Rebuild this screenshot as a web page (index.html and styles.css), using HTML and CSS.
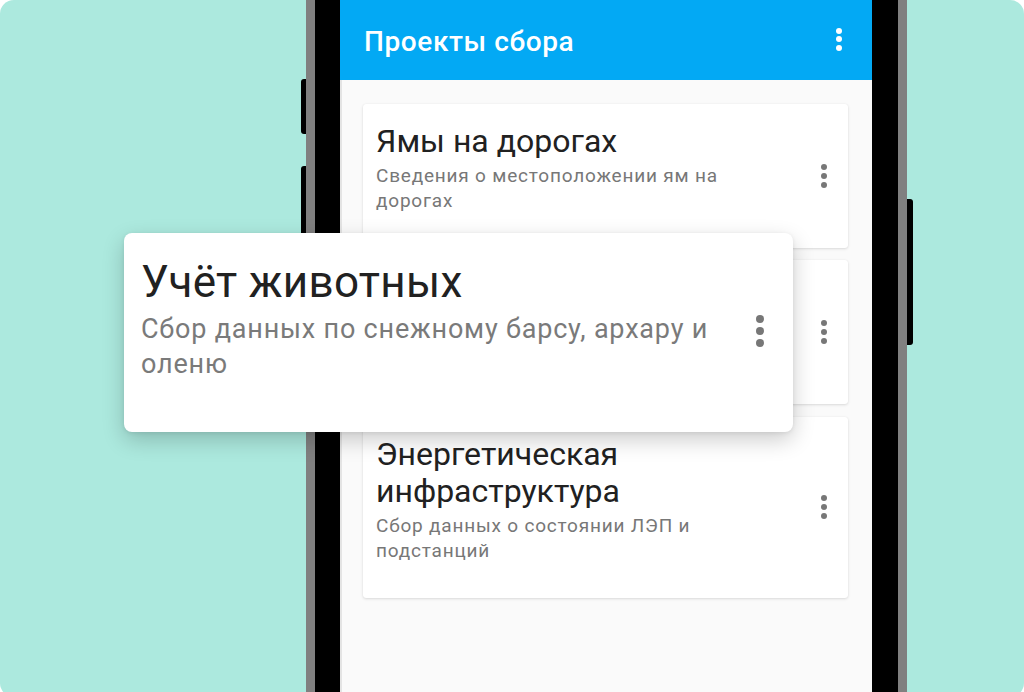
FILE: index.html
```html
<!DOCTYPE html>
<html lang="ru">
<head>
  <meta charset="UTF-8">
  <meta name="viewport" content="width=device-width, initial-scale=1.0">
  <title>Проекты сбора</title>
  <link rel="stylesheet" href="styles.css">
</head>
<body>
  <div class="frame">
    <!-- Phone mockup -->
    <div class="phone">
      <span class="side-btn side-btn-left side-btn-top"></span>
      <span class="side-btn side-btn-left side-btn-mid"></span>
      <span class="side-btn side-btn-right"></span>

      <div class="screen">
        <header class="appbar">
          <h1>Проекты сбора</h1>
          <span class="dots dots-light"><i></i><i></i><i></i></span>
        </header>

        <div class="project-list">
          <div class="project-card">
            <div class="project-text">
              <div class="project-title">Ямы на дорогах</div>
              <div class="project-desc">Сведения о местоположении ям на дорогах</div>
            </div>
            <div class="project-menu"><span class="dots"><i></i><i></i><i></i></span></div>
          </div>

          <!-- covered by the zoomed card -->
          <div class="project-card project-card-behind">
            <div class="project-text">
              <div class="project-title">Учёт животных</div>
              <div class="project-desc">Сбор данных по снежному барсу, архару и оленю</div>
            </div>
            <div class="project-menu"><span class="dots"><i></i><i></i><i></i></span></div>
          </div>

          <div class="project-card">
            <div class="project-text">
              <div class="project-title">Энергетическая инфраструктура</div>
              <div class="project-desc">Сбор данных о состоянии ЛЭП и подстанций</div>
            </div>
            <div class="project-menu"><span class="dots"><i></i><i></i><i></i></span></div>
          </div>
        </div>
      </div>
    </div>

    <!-- Zoomed card on top -->
    <div class="project-card project-card-zoom">
      <div class="project-text">
        <div class="project-title">Учёт животных</div>
        <div class="project-desc">Сбор данных по снежному барсу, архару и оленю</div>
      </div>
      <div class="project-menu"><span class="dots"><i></i><i></i><i></i></span></div>
    </div>
  </div>
</body>
</html>
```

FILE: styles.css
```css
body {
  margin: 0;
  padding: 0;
  background-color: #ffffff;
  font-family: Roboto, "Noto Sans", sans-serif;
  overflow: hidden;
}

.frame {
  position: relative;
  width: 1024px;
  height: 697px;
  background-color: #ace9de;
  border-radius: 14px;
  overflow: hidden;
  display: flex;
  padding-left: 306px;
  box-sizing: border-box;
}

/* Phone */

.phone {
  position: relative;
  width: 601px;
  height: 100%;
  background-color: #000000;
  border-left: 9px solid #808080;
  border-right: 9px solid #808080;
  padding: 0 26px 0 25px;
  box-sizing: border-box;
  display: flex;
}

.side-btn {
  position: absolute;
  background-color: #000000;
}

.side-btn-left {
  left: -14px;
  width: 5px;
  border-radius: 3px 0 0 3px;
}

.side-btn-top {
  top: 79px;
  height: 55px;
}

.side-btn-mid {
  top: 166px;
  height: 90px;
}

.side-btn-right {
  right: -15px;
  top: 199px;
  width: 6px;
  height: 146px;
  border-radius: 0 3px 3px 0;
}

.screen {
  flex: 1;
  background-color: #fafafa;
  border-left: 2px solid #e4e4e4;
  display: flex;
  flex-direction: column;
}

.appbar {
  height: 80px;
  margin-left: -2px;
  background-color: #03a9f4;
  display: flex;
  align-items: center;
  justify-content: space-between;
  padding: 0 30px 0 24px;
  flex-shrink: 0;
}

.appbar h1 {
  margin: 0;
  font-size: 28px;
  font-weight: 500;
  letter-spacing: 0.6px;
  color: #ffffff;
  padding-top: 3px;
}

/* Three dot menu */

.dots {
  display: flex;
  flex-direction: column;
  gap: 3px;
}

.dots i {
  display: block;
  width: 6px;
  height: 6px;
  border-radius: 50%;
  background-color: #777777;
}

.dots-light {
  gap: 2.5px;
  margin-top: -2px;
}

.dots-light i {
  background-color: #ffffff;
}

/* Cards */

.project-list {
  display: flex;
  flex-direction: column;
  gap: 12.5px;
  padding: 24px 24px 0 21px;
}

.project-card {
  display: flex;
  align-items: center;
  background-color: #ffffff;
  border-radius: 3px;
  box-shadow: 0 1px 3px rgba(0, 0, 0, 0.13), 0 0 1px rgba(0, 0, 0, 0.08);
  padding: 18.6px 0 35px 13px;
}

.project-card-behind .project-text {
  visibility: hidden;
}

.project-text {
  flex: 1;
}

.project-title {
  font-size: 32px;
  line-height: 37px;
  color: #212121;
}

.project-desc {
  margin-top: 3.4px;
  font-size: 19px;
  line-height: 25px;
  letter-spacing: 0.8px;
  color: #777777;
}

.project-menu {
  width: 56px;
  align-self: stretch;
  display: flex;
  align-items: center;
  justify-content: flex-end;
  padding-right: 21px;
  box-sizing: border-box;
  margin-bottom: -16px;
}

/* Zoomed-in copy of the second card */

.project-card-zoom {
  position: absolute;
  left: 124px;
  top: 233px;
  width: 669px;
  box-sizing: border-box;
  border-radius: 8px;
  padding: 24px 0 50px 17px;
  box-shadow: 0 8px 22px rgba(0, 0, 0, 0.2), 0 1px 4px rgba(0, 0, 0, 0.08);
}

.project-card-zoom .project-title {
  font-size: 44px;
  line-height: 50px;
  letter-spacing: 0.3px;
}

.project-card-zoom .project-desc {
  margin-top: 5px;
  font-size: 27px;
  line-height: 35px;
  letter-spacing: 0.8px;
  color: #7a7a7a;
}

.project-card-zoom .project-menu {
  width: 66px;
  justify-content: center;
  padding-right: 0;
  margin-bottom: -22px;
}

.project-card-zoom .dots {
  gap: 4px;
}

.project-card-zoom .dots i {
  width: 8px;
  height: 8px;
}
```
